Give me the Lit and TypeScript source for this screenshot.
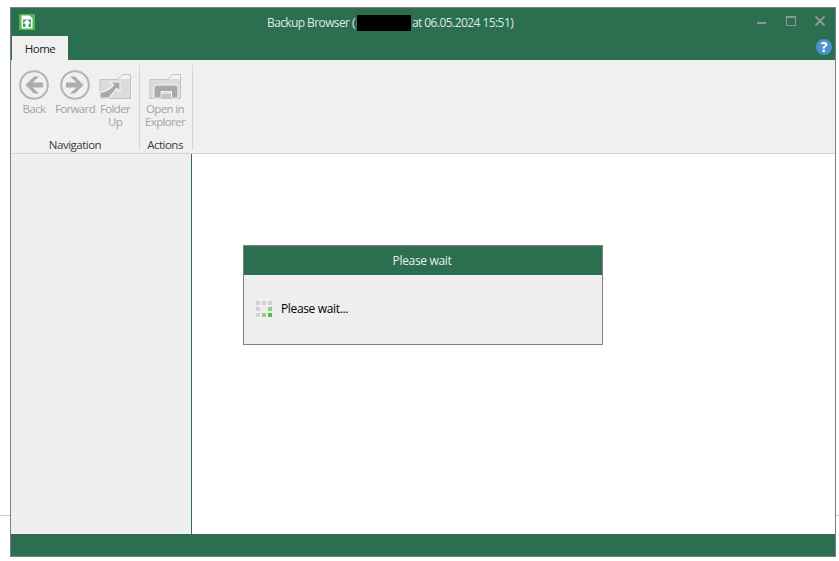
import { LitElement, html, css, svg } from "lit";
import { customElement } from "lit/decorators.js";

@customElement("app-root")
export class AppRoot extends LitElement {
  static styles = css`
    :host { --green: #2b6e50; display: block; width: 839px; height: 561px; position: relative; overflow: hidden; background: #fff;
      font-family: "Open Sans", "Noto Sans", sans-serif; font-size: 12px; }
    * { box-sizing: border-box; }
    .page { padding: 7px 0 0 10px; }
    .stray { position: absolute; top: 515px; height: 1px; background: #c8c8c8; }
    .stray.l { left: 0; width: 10px; }
    .stray.r { left: 836px; width: 3px; }
    .window { width: 826px; height: 550px; border: 1px solid #7f7f7f; display: flex; flex-direction: column; background: #fff; }
    .top { height: 52px; background: var(--green); display: flex; flex-direction: column; flex: none; }
    .titlebar { height: 28px; display: grid; grid-template-columns: 256px auto 1fr; align-items: center; }
    .logo { margin: -1px 0 0 8px; display: block; }
    .title { color: #dfe9e4; font-size: 12px; display: flex; align-items: center; white-space: pre; }
    .t1 { letter-spacing: -0.6px; }
    .t2 { letter-spacing: -0.56px; }
    .redact { width: 54px; height: 16px; background: #000; margin: 2px 1px 0 2px; }
    .controls { justify-self: end; display: flex; gap: 19px; align-items: center; margin: -2px 10px 0 0; }
    .controls svg { display: block; }
    .tabrow { height: 24px; display: flex; justify-content: space-between; }
    .tab { width: 56px; margin-left: 1px; background: #f0f0f0; color: #1e1e1e; font-size: 11.5px; display: flex; align-items: center; justify-content: center; letter-spacing: -0.5px; }
    .help { margin: 2px 2px 0 0; }
    .ribbon { height: 94px; flex: none; background: #f0f0f0; border-bottom: 1px solid #d3d3d3; display: flex; padding-top: 5px; }
    .group { display: flex; flex-direction: column; border-right: 1px solid #d5d5d5; height: 85px; }
    .group.nav { width: 129px; }
    .group.act { width: 53px; }
    .items { display: flex; flex: 1; padding-top: 4px; }
    .item { display: flex; flex-direction: column; align-items: center; color: #a3a3a3; font-size: 11.5px; line-height: 13px; letter-spacing: -0.65px; text-align: center; }
    .item svg { display: block; margin-bottom: 1px; }
    .group-label { color: #3c3c3c; font-size: 11.5px; line-height: 14px; text-align: center; letter-spacing: -0.5px; margin-bottom: -2px; }
    .nav .item.back { width: 42px; margin-left: 2px; }
    .nav .item.fwd { width: 40px; }
    .nav .item.up { width: 40px; }
    .act .item { width: 50px; }
    .act .group-label { padding-right: 2px; }
    .main { flex: 1; display: flex; min-height: 0; }
    .side { width: 181px; flex: none; background: #efefef; border-right: 1px solid var(--green); }
    .content { flex: 1; padding: 91px 0 0 51px; }
    .dialog { width: 360px; height: 100px; border: 1px solid #7f7f7f; background: #efefef; }
    .dlg-head { height: 29px; background: var(--green); color: #e8f0ec; font-size: 12px; letter-spacing: -0.34px; padding-right: 2px; display: flex; align-items: center; justify-content: center; }
    .dlg-body { display: flex; align-items: center; gap: 9px; padding: 25px 0 0 12px; color: #000; font-size: 12px; letter-spacing: -0.35px; }
    .spin { display: grid; grid-template-columns: repeat(3, 4px); grid-auto-rows: 4px; gap: 2px; }
    .spin i { background: #d2d2d2; }
    .spin i.e { background: transparent; }
    .spin i.m { background: #96cb8e; }
    .spin i.s { background: #4fb848; }
    .footer { height: 22px; flex: none; background: var(--green); }
  `;

  private folder(inner: unknown) {
    return html`<svg width="34" height="32" viewBox="0 0 34 32">
      <path d="M2 10H20L24.5 5H33V29.5H2Z" fill="#dcdcdc"/>
      <path d="M20.5 10L24.7 5.5H32.5V10Z" fill="#f1f1f1"/>
      <path d="M2 10.5H20L24.5 5.5H32.5V29.5H2V10.5" fill="none" stroke="#c2c2c2"/>
      ${inner}
    </svg>`;
  }

  render() {
    const arrow = (left: boolean) => html`<svg width="32" height="32" viewBox="0 0 32 32">
      <circle cx="16" cy="16" r="13.8" fill="none" stroke="#b4b4b4" stroke-width="2"/>
      <g transform=${left ? "translate(0 0)" : "translate(32 0) scale(-1 1)"}>
        <path d="M16 7.5L7.5 16L16 24.5H21L14.5 18.5H25V13.5H14.5L21 7.5Z" fill="#adadad"/>
      </g>
    </svg>`;
    return html`
      <div class="stray l"></div><div class="stray r"></div>
      <div class="page">
        <div class="window">
          <div class="top">
            <div class="titlebar">
              <svg class="logo" width="16" height="16" viewBox="0 0 16 16">
                <rect width="16" height="16" fill="#4fb848"/>
                <path d="M2.5 1.5H10.5L13.5 4.5V14.5H2.5Z" fill="#fff"/>
                <rect x="4" y="5.5" width="8" height="7.5" fill="#3f9f70"/>
                <path d="M8 5.5L12 9.5H9.5V13H6.5V9.5H4Z" fill="#fff"/>
              </svg>
              <div class="title"><span class="t1">Backup Browser (</span><span class="redact"></span><span class="t2">at 06.05.2024 15:51)</span></div>
              <div class="controls">
                <svg width="10" height="10" viewBox="0 0 10 10"><rect y="6" width="9" height="2" fill="#8a9b91"/></svg>
                <svg width="10" height="10" viewBox="0 0 10 10"><rect x=".5" y=".5" width="9" height="9" fill="none" stroke="#8a9b91"/><rect width="10" height="2" fill="#8a9b91"/></svg>
                <svg width="10" height="10" viewBox="0 0 10 10"><path d="M.5 .5L9.5 9.5M9.5 .5L.5 9.5" stroke="#8a9b91" stroke-width="2"/></svg>
              </div>
            </div>
            <div class="tabrow">
              <div class="tab">Home</div>
              <svg class="help" width="18" height="18" viewBox="0 0 18 18">
                <circle cx="9" cy="9" r="8" fill="#4a94cb"/>
                <text x="9" y="14" text-anchor="middle" fill="#fff" font-size="14" font-weight="700" font-family="Open Sans, sans-serif">?</text>
              </svg>
            </div>
          </div>
          <div class="ribbon">
            <div class="group nav">
              <div class="items">
                <div class="item back">${arrow(true)}Back</div>
                <div class="item fwd">${arrow(false)}Forward</div>
                <div class="item up">${this.folder(svg`<path d="M2 28V23C8 23 12 20 15.5 16L12.5 13H22V22.5L18.8 19.5C15 24 12 27 11 29H2Z" fill="#a8a8a8" stroke="#f2f2f2" stroke-width="1.2"/>`)}Folder<br>Up</div>
              </div>
              <div class="group-label">Navigation</div>
            </div>
            <div class="group act">
              <div class="items">
                <div class="item">${this.folder(svg`<path d="M6 29V19.5C6 17.5 7.5 16 9.5 16H26.5C28.5 16 30 17.5 30 19.5V29H23.5V22.5H13V29Z" fill="#a8a8a8" stroke="#f4f4f4" stroke-width="1"/><rect x="13.5" y="25" width="9.5" height="4" fill="#c4c4c4"/>`)}Open in<br>Explorer</div>
              </div>
              <div class="group-label">Actions</div>
            </div>
          </div>
          <div class="main">
            <div class="side"></div>
            <div class="content">
              <div class="dialog">
                <div class="dlg-head">Please wait</div>
                <div class="dlg-body">
                  <div class="spin"><i></i><i></i><i></i><i></i><i class="e"></i><i class="m"></i><i></i><i class="m"></i><i class="s"></i></div>
                  <span>Please wait...</span>
                </div>
              </div>
            </div>
          </div>
          <div class="footer"></div>
        </div>
      </div>
    `;
  }
}
